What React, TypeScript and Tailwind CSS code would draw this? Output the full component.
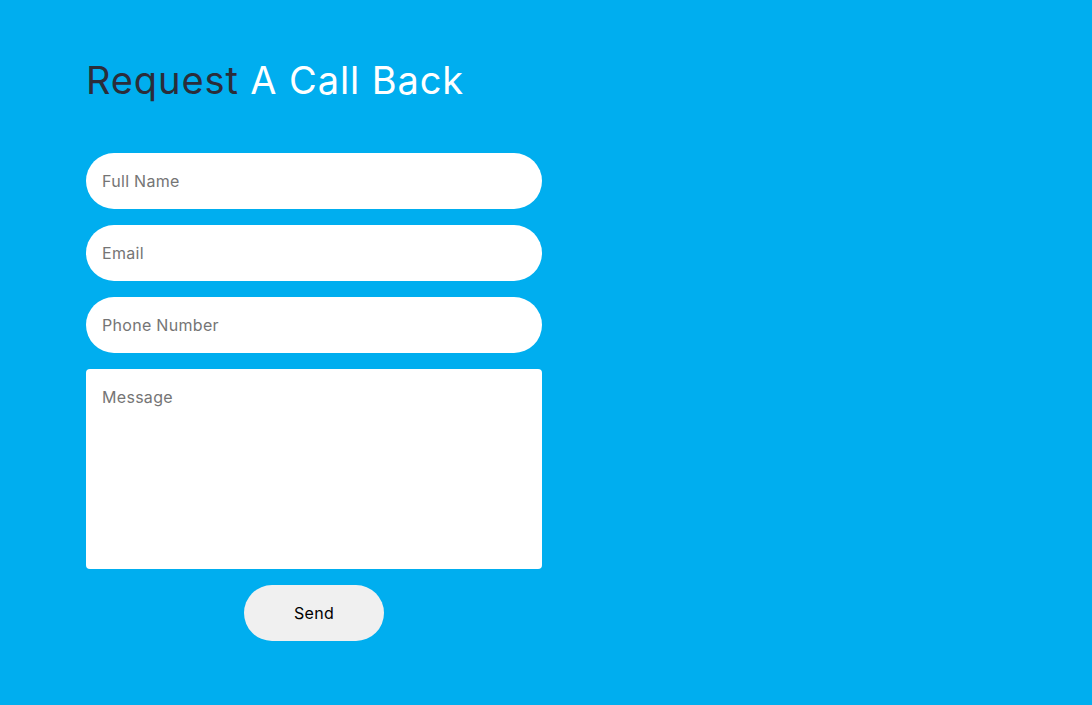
import React from "react";

export default function App() {
  const font = { fontFamily: "Inter, 'Noto Sans', sans-serif" };
  return (
    <div className="min-h-[705px] w-full bg-[#00aeef] pl-[86px] pt-[56px]" style={font}>
      <h1 className="text-[38px] font-normal leading-[48px] tracking-[0.9px] text-white">
        <span className="text-[#2b2d3a]">Request</span> A Call Back
      </h1>
      <form className="mt-[49px] flex w-[456px] flex-col gap-4" onSubmit={(e) => e.preventDefault()}>
        <input
          className="h-14 w-full rounded-full bg-white px-4 text-base tracking-[0.3px] text-[#333] outline-none placeholder:text-[#757575]"
          placeholder="Full Name"
        />
        <input
          className="h-14 w-full rounded-full bg-white px-4 text-base tracking-[0.3px] text-[#333] outline-none placeholder:text-[#757575]"
          placeholder="Email"
        />
        <input
          className="h-14 w-full rounded-full bg-white px-4 text-base tracking-[0.3px] text-[#333] outline-none placeholder:text-[#757575]"
          placeholder="Phone Number"
        />
        <textarea
          className="h-[200px] w-full resize-none rounded bg-white px-4 pt-[16px] text-base tracking-[0.3px] text-[#333] outline-none placeholder:text-[#757575]"
          placeholder="Message"
        />
        <div className="flex justify-center">
          <button className="h-14 w-[140px] rounded-full bg-[#f0f0f0] text-base tracking-[0.3px] text-black">Send</button>
        </div>
      </form>
    </div>
  );
}
